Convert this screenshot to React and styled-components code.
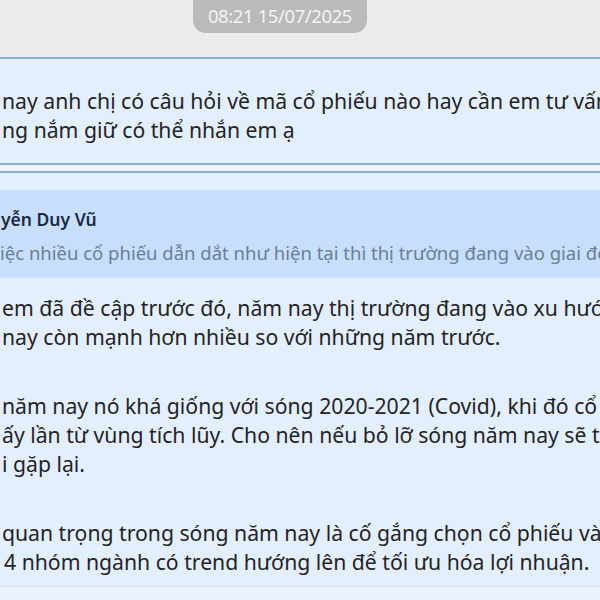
import React from "react";
import styled, { createGlobalStyle } from "styled-components";

const Global = createGlobalStyle`
  html, body { margin: 0; padding: 0; }
  body { width: 600px; height: 600px; overflow: hidden; background: #ececee; font-family: "Noto Sans", "Open Sans", sans-serif; }
`;

const Page = styled.div`
  width: 600px;
  height: 600px;
  overflow: hidden;
  background: #ececee;
  display: flex;
  flex-direction: column;
`;

const TimeRow = styled.div`
  height: 57px;
  flex-shrink: 0;
  display: flex;
  justify-content: center;
  align-items: flex-start;
`;

const TimePill = styled.div`
  margin-right: 40px;
  height: 33px;
  width: 174px;
  box-sizing: border-box;
  text-align: center;
  border-radius: 0 0 13px 13px;
  background: #b9babc;
  color: #f4f4f5;
  font-size: 18.5px;
  line-height: 32px;
  letter-spacing: -0.4px;
`;

const Bubble = styled.div`
  flex-shrink: 0;
  background: #e3effc;
  border-top: 2px solid #8eabd2;
  border-bottom: ${(p) => (p.$closed ? "2px solid #8eabd2" : "1px solid #d2e0f1")};
  padding: ${(p) => p.$pad};
`;

const Line = styled.div`
  white-space: nowrap;
  font-size: 21.2px;
  line-height: 29px;
  color: #242424;
  padding-left: ${(p) => p.$indent || "2px"};
`;

const Gap = styled.div`
  flex-shrink: 0;
  height: 6px;
  background: #ecf3fc;
`;

const Quote = styled.div`
  background: #c7dffa;
  padding: 16px 0 0 0;
  height: 88px;
  box-sizing: border-box;
`;

const QuoteName = styled.div`
  white-space: nowrap;
  font-size: 17.5px;
  font-weight: 600;
  color: #1c2a42;
  line-height: 26px;
  padding-left: 1px;
`;

const QuoteText = styled.div`
  white-space: nowrap;
  font-size: 18.5px;
  color: #6b7e98;
  line-height: 26px;
  margin-top: 8px;
`;

const Para = styled.div`
  margin-top: ${(p) => p.$mt || "0"};
`;

const Footer = styled.div`
  flex: 1;
  background: #e9f2fc;
`;

export default function App() {
  return (
    <>
      <Global />
      <Page>
        <TimeRow>
          <TimePill>08:21 15/07/2025</TimePill>
        </TimeRow>
        <Bubble $closed $pad="27px 0 19px 0">
          <Line>nay anh chị có câu hỏi về mã cổ phiếu nào hay cần em tư vấn</Line>
          <Line>ng nắm giữ có thể nhắn em ạ</Line>
        </Bubble>
        <Gap />
        <Bubble $pad="17px 0 10px 0">
          <Quote>
            <QuoteName>yễn Duy Vũ</QuoteName>
            <QuoteText>iệc nhiều cổ phiếu dẫn dắt như hiện tại thì thị trường đang vào giai đoạn</QuoteText>
          </Quote>
          <Para $mt="15px">
            <Line>em đã đề cập trước đó, năm nay thị trường đang vào xu hướng</Line>
            <Line>nay còn mạnh hơn nhiều so với những năm trước.</Line>
          </Para>
          <Para $mt="40px">
            <Line>năm nay nó khá giống với sóng 2020-2021 (Covid), khi đó cổ</Line>
            <Line>ấy lần từ vùng tích lũy. Cho nên nếu bỏ lỡ sóng năm nay sẽ thì</Line>
            <Line>i gặp lại.</Line>
          </Para>
          <Para $mt="40px">
            <Line>quan trọng trong sóng năm nay là cố gắng chọn cổ phiếu vào</Line>
            <Line $indent="4px">4 nhóm ngành có trend hướng lên để tối ưu hóa lợi nhuận.</Line>
          </Para>
        </Bubble>
        <Footer />
      </Page>
    </>
  );
}
